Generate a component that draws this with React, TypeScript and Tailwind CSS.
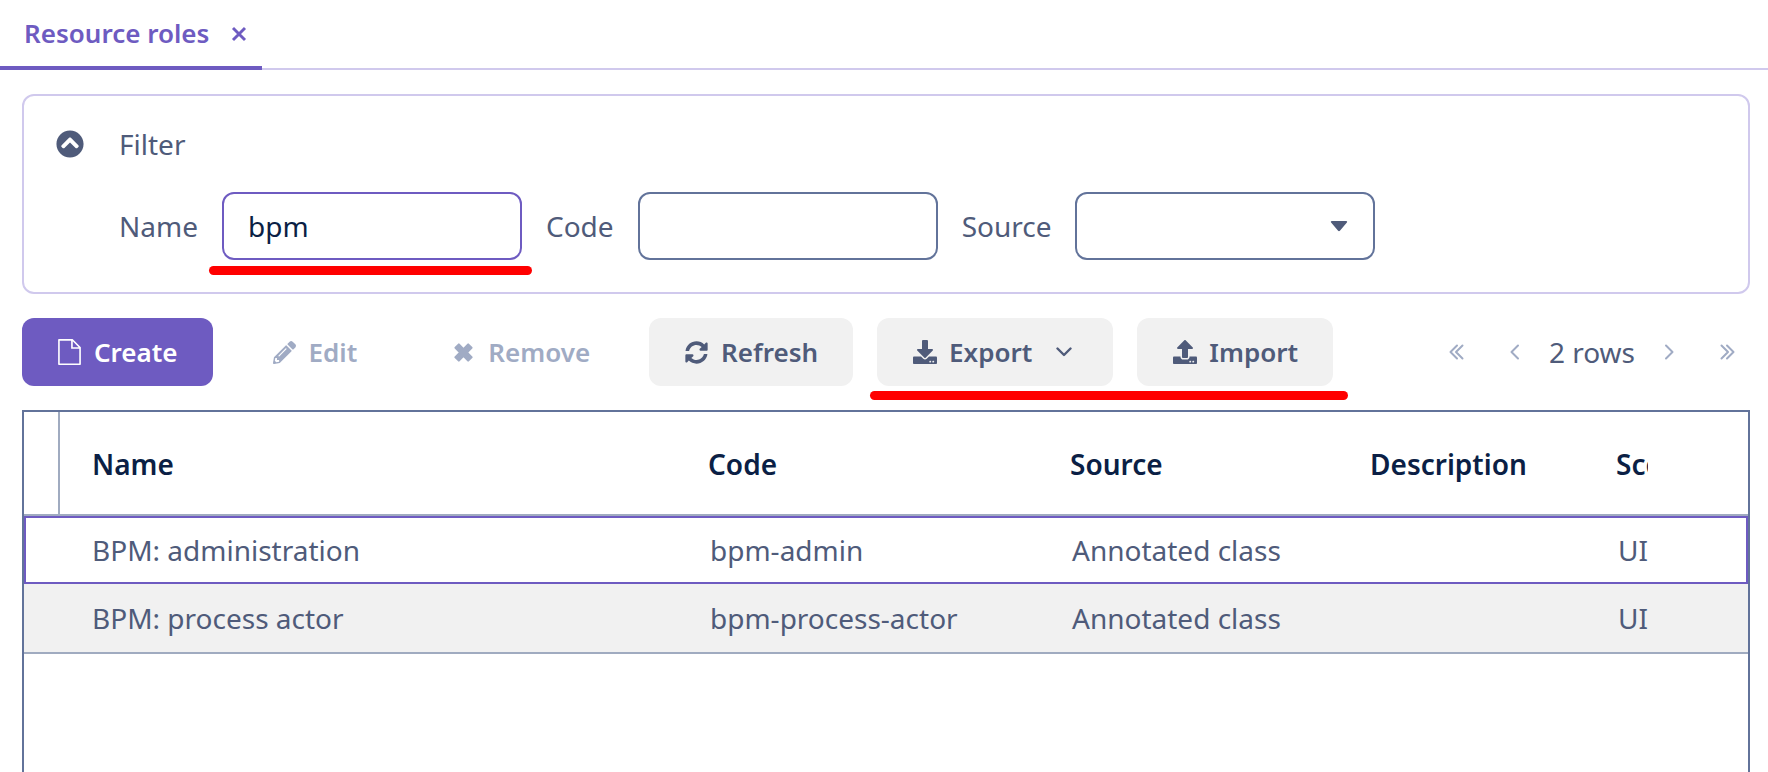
import { useState, type ReactNode } from 'react';
import {
  FaChevronCircleUp,
  FaDownload,
  FaPencilAlt,
  FaSyncAlt,
  FaUpload,
} from 'react-icons/fa';

const rows = [
  { name: 'BPM: administration', code: 'bpm-admin', source: 'Annotated class', description: '', scope: 'UI' },
  { name: 'BPM: process actor', code: 'bpm-process-actor', source: 'Annotated class', description: '', scope: 'UI' },
];

function FileIcon() {
  return (
    <svg viewBox="1 0 14 16" className="h-[26px] w-[23px] shrink-0" fill="currentColor" aria-hidden="true">
      <path d="M9.9 0H1.5a.5.5 0 0 0-.5.5v15a.5.5 0 0 0 .5.5h13a.5.5 0 0 0 .5-.5V5.1L9.9 0zM10 1.4 13.6 5H10V1.4zM14 15H2V1h7v5h5v9z" />
    </svg>
  );
}

function CrossIcon() {
  return (
    <svg viewBox="0 0 16 16" className="h-4 w-4" fill="none" stroke="currentColor" strokeWidth="2.9" aria-hidden="true">
      <path d="M2 2 14 14M14 2 2 14" />
    </svg>
  );
}

function BoldCrossIcon() {
  return (
    <svg viewBox="0 0 18 18" className="h-[19px] w-[19px] shrink-0" fill="currentColor" stroke="currentColor" strokeWidth="2" strokeLinejoin="round" aria-hidden="true">
      <path d="M4.6 1.4 9 5.8 13.4 1.4 16.6 4.6 12.2 9 16.6 13.4 13.4 16.6 9 12.2 4.6 16.6 1.4 13.4 5.8 9 1.4 4.6z" />
    </svg>
  );
}

function Chevron({ d, width, height, strokeWidth = 2 }: { d: string; width: number; height: number; strokeWidth?: number }) {
  return (
    <svg width={width} height={height} viewBox={`0 0 ${width} ${height}`} fill="none" stroke="currentColor" strokeWidth={strokeWidth} strokeLinecap="round" strokeLinejoin="round" aria-hidden="true">
      <path d={d} />
    </svg>
  );
}

const variants = {
  primary: 'bg-[#6e5bc1] text-white',
  neutral: 'bg-[#f1f1f1] text-[#4f5b7a]',
  disabled: 'text-[#a0abc4]',
};

function ToolButton({ icon, label, variant = 'neutral', trailing }: { icon: ReactNode; label: string; variant?: keyof typeof variants; trailing?: ReactNode }) {
  return (
    <button
      type="button"
      disabled={variant === 'disabled'}
      className={`flex h-[68px] shrink-0 items-center gap-[13px] rounded-xl pr-[35px] pl-9 text-[26px] font-semibold ${variants[variant]}`}
    >
      <span className="flex w-[23px] justify-center">{icon}</span>
      {label}
      {trailing}
    </button>
  );
}

function Underline({ className }: { className: string }) {
  return <div className={`pointer-events-none absolute h-[9px] rounded-full bg-[#ff0000] ${className}`} />;
}

const field = 'h-[68px] w-[300px] rounded-xl border-2 bg-white outline-none';

export default function App() {
  const [name, setName] = useState('bpm');
  const [code, setCode] = useState('');

  return (
    <div className="flex min-h-screen flex-col bg-white font-['Noto_Sans',sans-serif] text-[28px] leading-10 text-[#4f5b7a]">
      <header className="flex h-[70px] items-end border-b-2 border-[#d0c9ed]">
        <div className="-mb-0.5 flex h-[70px] items-center gap-[22px] border-b-4 border-[#6e5bc1] pr-[15px] pl-6 text-[26px] font-semibold text-[#6e5bc1]">
          <span>Resource roles</span>
          <button type="button" aria-label="Close tab" className="pt-0.5">
            <CrossIcon />
          </button>
        </div>
      </header>

      <main className="flex grow flex-col gap-6 px-[18px] pt-6 pl-[22px]">
        <section className="rounded-xl border-2 border-[#d0c9ed] px-8 pt-7 pb-8">
          <div className="mb-7 flex items-center gap-[35px]">
            <button type="button" aria-label="Collapse filter">
              <FaChevronCircleUp className="h-7 w-7" />
            </button>
            <h2>Filter</h2>
          </div>
          <div className="flex items-center gap-6 pl-[63px]">
            <label htmlFor="name">Name</label>
            <div className="relative">
              <input id="name" value={name} onChange={(e) => setName(e.target.value)} className={`${field} block border-[#6e5bc1] px-6 text-[#0b1f45]`} />
              <Underline className="top-[74px] -right-2.5 -left-[13px]" />
            </div>
            <label htmlFor="code">Code</label>
            <input id="code" value={code} onChange={(e) => setCode(e.target.value)} className={`${field} border-[#62739a] px-6`} />
            <label htmlFor="source">Source</label>
            <div className="relative">
              <select id="source" className={`${field} block appearance-none border-[#62739a] pr-16 pl-6`}>
                <option value=""></option>
                <option>Annotated class</option>
                <option>Database</option>
              </select>
              <svg viewBox="0 0 18 12" className="pointer-events-none absolute top-7 right-[27px] h-3 w-[18px]" fill="currentColor" aria-hidden="true">
                <path d="M1.8 1h14.4c.9 0 1.3 1 .7 1.6L9.9 10.7c-.5.6-1.3.6-1.8 0L1.1 2.6C.5 2 .9 1 1.8 1z" />
              </svg>
            </div>
          </div>
        </section>

        <div className="flex items-center gap-6">
          <ToolButton icon={<FileIcon />} label="Create" variant="primary" />
          <ToolButton icon={<FaPencilAlt className="h-[23px] w-[23px] shrink-0" />} label="Edit" variant="disabled" />
          <ToolButton icon={<BoldCrossIcon />} label="Remove" variant="disabled" />
          <ToolButton icon={<FaSyncAlt className="h-[23px] w-[23px] shrink-0" />} label="Refresh" />
          <div className="relative flex gap-6">
            <ToolButton
              icon={<FaDownload className="h-6 w-6 shrink-0" />}
              label="Export"
              trailing={
                <span className="pr-1.5 pl-[11px]">
                  <Chevron d="M1.5 1.5 8 8 14.5 1.5" width={16} height={10} strokeWidth={2.4} />
                </span>
              }
            />
            <ToolButton icon={<FaUpload className="h-6 w-6 shrink-0" />} label="Import" />
            <Underline className="top-[73px] -right-[15px] -left-[7px]" />
          </div>
          <nav aria-label="Pages" className="ml-auto flex items-center pr-[15px] whitespace-nowrap">
            <button type="button" disabled aria-label="First page" className="text-[#a0abc4]">
              <Chevron d="M8 1.5 1.5 8 8 14.5M13.5 1.5 7 8 13.5 14.5" width={15} height={16} />
            </button>
            <button type="button" disabled aria-label="Previous page" className="ml-[46px] text-[#a0abc4]">
              <Chevron d="M8 1.5 1.5 8 8 14.5" width={10} height={16} />
            </button>
            <span className="mx-[29px]">2 rows</span>
            <button type="button" disabled aria-label="Next page" className="mr-[46px] text-[#a0abc4]">
              <Chevron d="M2 1.5 8.5 8 2 14.5" width={10} height={16} />
            </button>
            <button type="button" disabled aria-label="Last page" className="text-[#a0abc4]">
              <Chevron d="M1.5 1.5 8 8 1.5 14.5M7 1.5 13.5 8 7 14.5" width={15} height={16} />
            </button>
          </nav>
        </div>

        <div className="grow border-2 border-b-0 border-[#62739a]">
          <table className="w-full table-fixed border-separate border-spacing-0 text-left whitespace-nowrap">
            <colgroup>
              <col className="w-9" />
              <col />
              <col className="w-[362px]" />
              <col className="w-[300px]" />
              <col className="w-[246px]" />
              <col className="w-16" />
              <col className="w-[100px]" />
            </colgroup>
            <thead className="text-[#0b1f45]">
              <tr className="h-[104px] *:border-b-2 *:border-[#a0abc0] *:pt-0.5 *:pl-8 *:font-semibold">
                <th className="border-r-2" aria-label="Selection" />
                <th>Name</th>
                <th>Code</th>
                <th>Source</th>
                <th>Description</th>
                <th className="overflow-hidden">Scope</th>
                <th aria-label="Actions" />
              </tr>
            </thead>
            <tbody>
              {rows.map((row, i) => (
                <tr
                  key={row.code}
                  className={
                    i === 0
                      ? 'h-[68px] *:border-y-2 *:border-[#6e5bc1] *:first:border-l-2 *:last:border-r-2'
                      : 'h-[70px] bg-[#f1f1f1] *:border-b-2 *:border-[#a0abc0]'
                  }
                >
                  <td />
                  <td className="pl-8">{row.name}</td>
                  <td className="pl-[34px]">{row.code}</td>
                  <td className="pl-[34px]">{row.source}</td>
                  <td className="pl-[34px]">{row.description}</td>
                  <td className="overflow-hidden pl-[34px]">{row.scope}</td>
                  <td />
                </tr>
              ))}
            </tbody>
          </table>
        </div>
      </main>
    </div>
  );
}
